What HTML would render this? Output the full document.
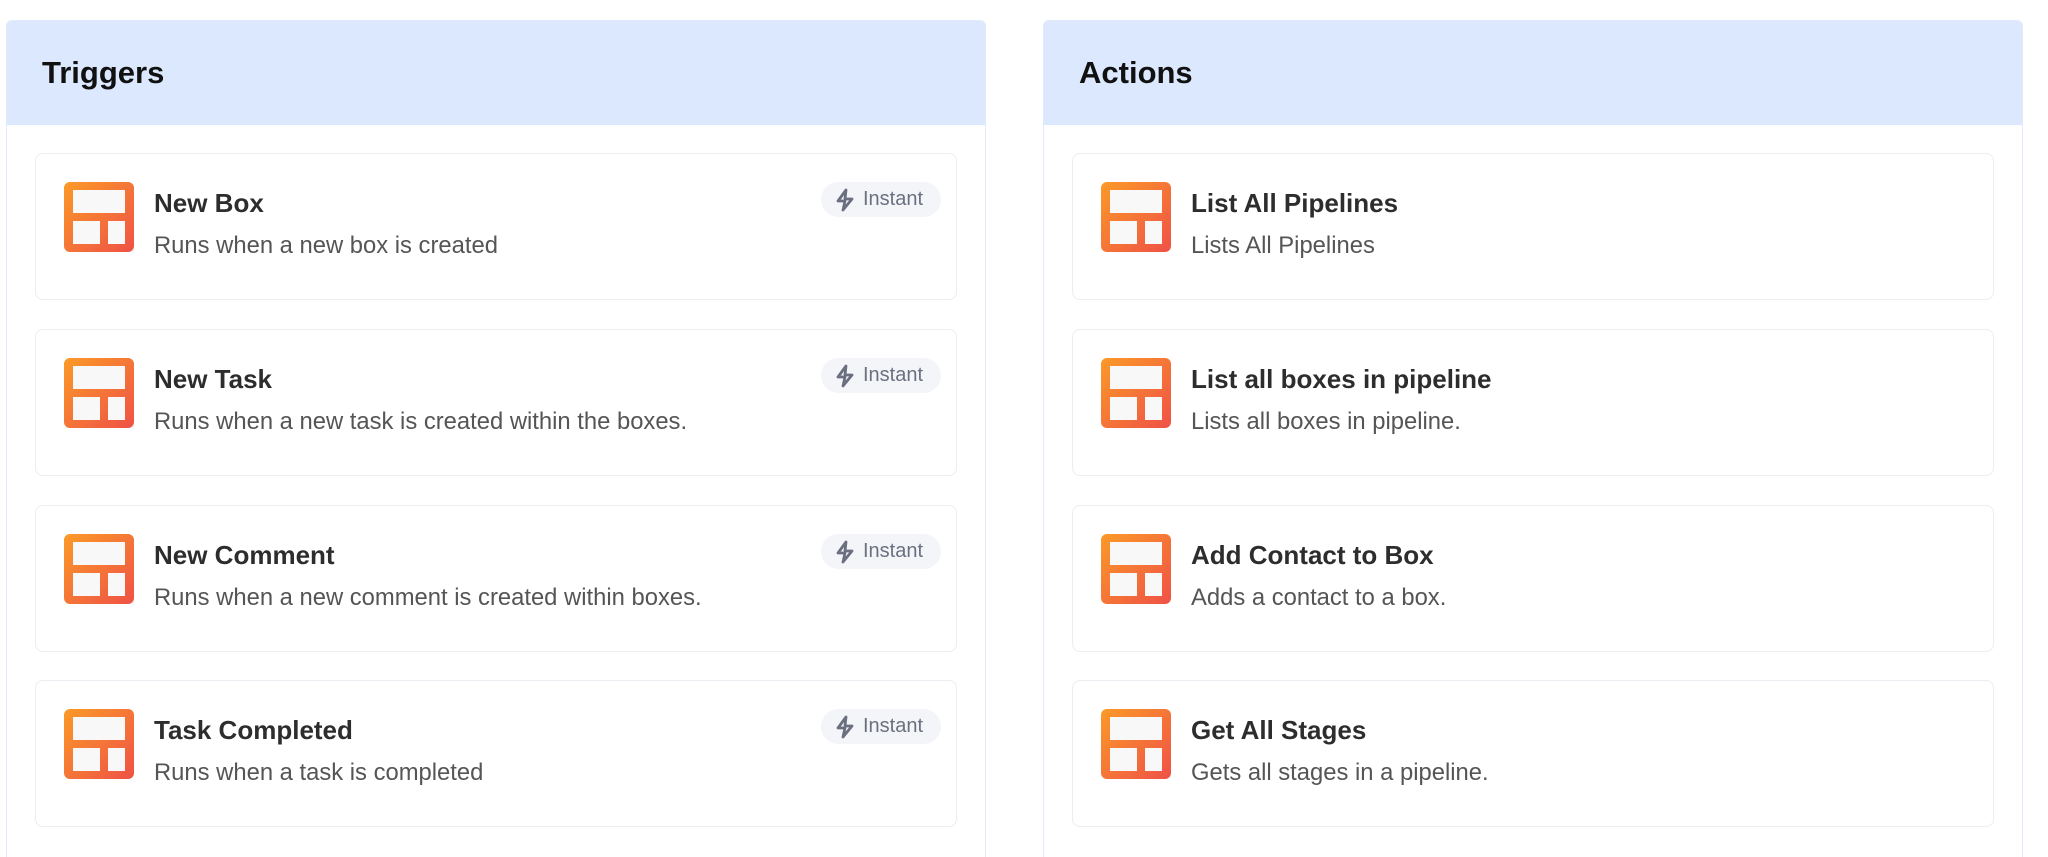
<!DOCTYPE html>
<html style="height:857px;overflow:hidden"><head><meta charset="utf-8"><style>
*{box-sizing:border-box;margin:0;padding:0}
body{width:2048px;height:857px;background:#fff;font-family:"Liberation Sans",sans-serif;position:relative;overflow:hidden}
.panel{position:absolute;top:20px;width:980px;height:837px;border:1px solid #e3e9f8;border-bottom:none;border-radius:6px 6px 0 0;overflow:hidden;background:#fff}
.hd{height:104px;background:#dbe8fd;padding-left:35px;font-weight:bold;font-size:31px;line-height:104px;color:#111}
.card{position:absolute;left:28px;width:922px;height:147px;border:1px solid #ebedf2;border-radius:8px;background:#fff}
.ic{position:absolute;left:28px;top:28px;width:70px;height:70px}
.t{position:absolute;left:118px;top:34px;font-size:26px;font-weight:bold;color:#2d2d2d}
.d{position:absolute;left:118px;top:78px;font-size:23.8px;color:#555}
.b{position:absolute;left:785px;top:28px;width:120px;height:35px;border-radius:18px;background:#f3f5f9;color:#6b7080;font-size:20px;line-height:35px;padding-left:42px}
.b svg{position:absolute;left:14px;top:6px}
</style></head><body>
<svg width="0" height="0" style="position:absolute"><defs><linearGradient id="g" x1="0" y1="0" x2="1" y2="1"><stop offset="0" stop-color="#fb9a28"/><stop offset="1" stop-color="#ef5146"/></linearGradient>
<symbol id="ico" viewBox="0 0 70 70"><rect width="70" height="70" rx="6" fill="url(#g)"/><rect x="9" y="8" width="52" height="23" fill="#f8f8f8"/><rect x="9" y="39" width="27" height="23" fill="#f8f8f8"/><rect x="44" y="39" width="17" height="23" fill="#f8f8f8"/></symbol>
<symbol id="bolt" viewBox="0 0 20 24"><path d="M11 2 L3 13 H10 L8 22 L17 11 H10 Z" fill="none" stroke="#6b7080" stroke-width="2.8" stroke-linejoin="round"/></symbol></defs></svg>

<div class="panel" style="left:6px">
<div class="hd">Triggers</div>
<div class="card" style="top:132px"><svg class="ic"><use href="#ico"/></svg><div class="t">New Box</div><div class="d">Runs when a new box is created</div><div class="b"><svg width="20" height="24"><use href="#bolt"/></svg>Instant</div></div>
<div class="card" style="top:308px"><svg class="ic"><use href="#ico"/></svg><div class="t">New Task</div><div class="d">Runs when a new task is created within the boxes.</div><div class="b"><svg width="20" height="24"><use href="#bolt"/></svg>Instant</div></div>
<div class="card" style="top:484px"><svg class="ic"><use href="#ico"/></svg><div class="t">New Comment</div><div class="d">Runs when a new comment is created within boxes.</div><div class="b"><svg width="20" height="24"><use href="#bolt"/></svg>Instant</div></div>
<div class="card" style="top:659px"><svg class="ic"><use href="#ico"/></svg><div class="t">Task Completed</div><div class="d">Runs when a task is completed</div><div class="b"><svg width="20" height="24"><use href="#bolt"/></svg>Instant</div></div>
</div>

<div class="panel" style="left:1043px">
<div class="hd">Actions</div>
<div class="card" style="top:132px"><svg class="ic"><use href="#ico"/></svg><div class="t">List All Pipelines</div><div class="d">Lists All Pipelines</div></div>
<div class="card" style="top:308px"><svg class="ic"><use href="#ico"/></svg><div class="t">List all boxes in pipeline</div><div class="d">Lists all boxes in pipeline.</div></div>
<div class="card" style="top:484px"><svg class="ic"><use href="#ico"/></svg><div class="t">Add Contact to Box</div><div class="d">Adds a contact to a box.</div></div>
<div class="card" style="top:659px"><svg class="ic"><use href="#ico"/></svg><div class="t">Get All Stages</div><div class="d">Gets all stages in a pipeline.</div></div>
</div>
</body></html>
